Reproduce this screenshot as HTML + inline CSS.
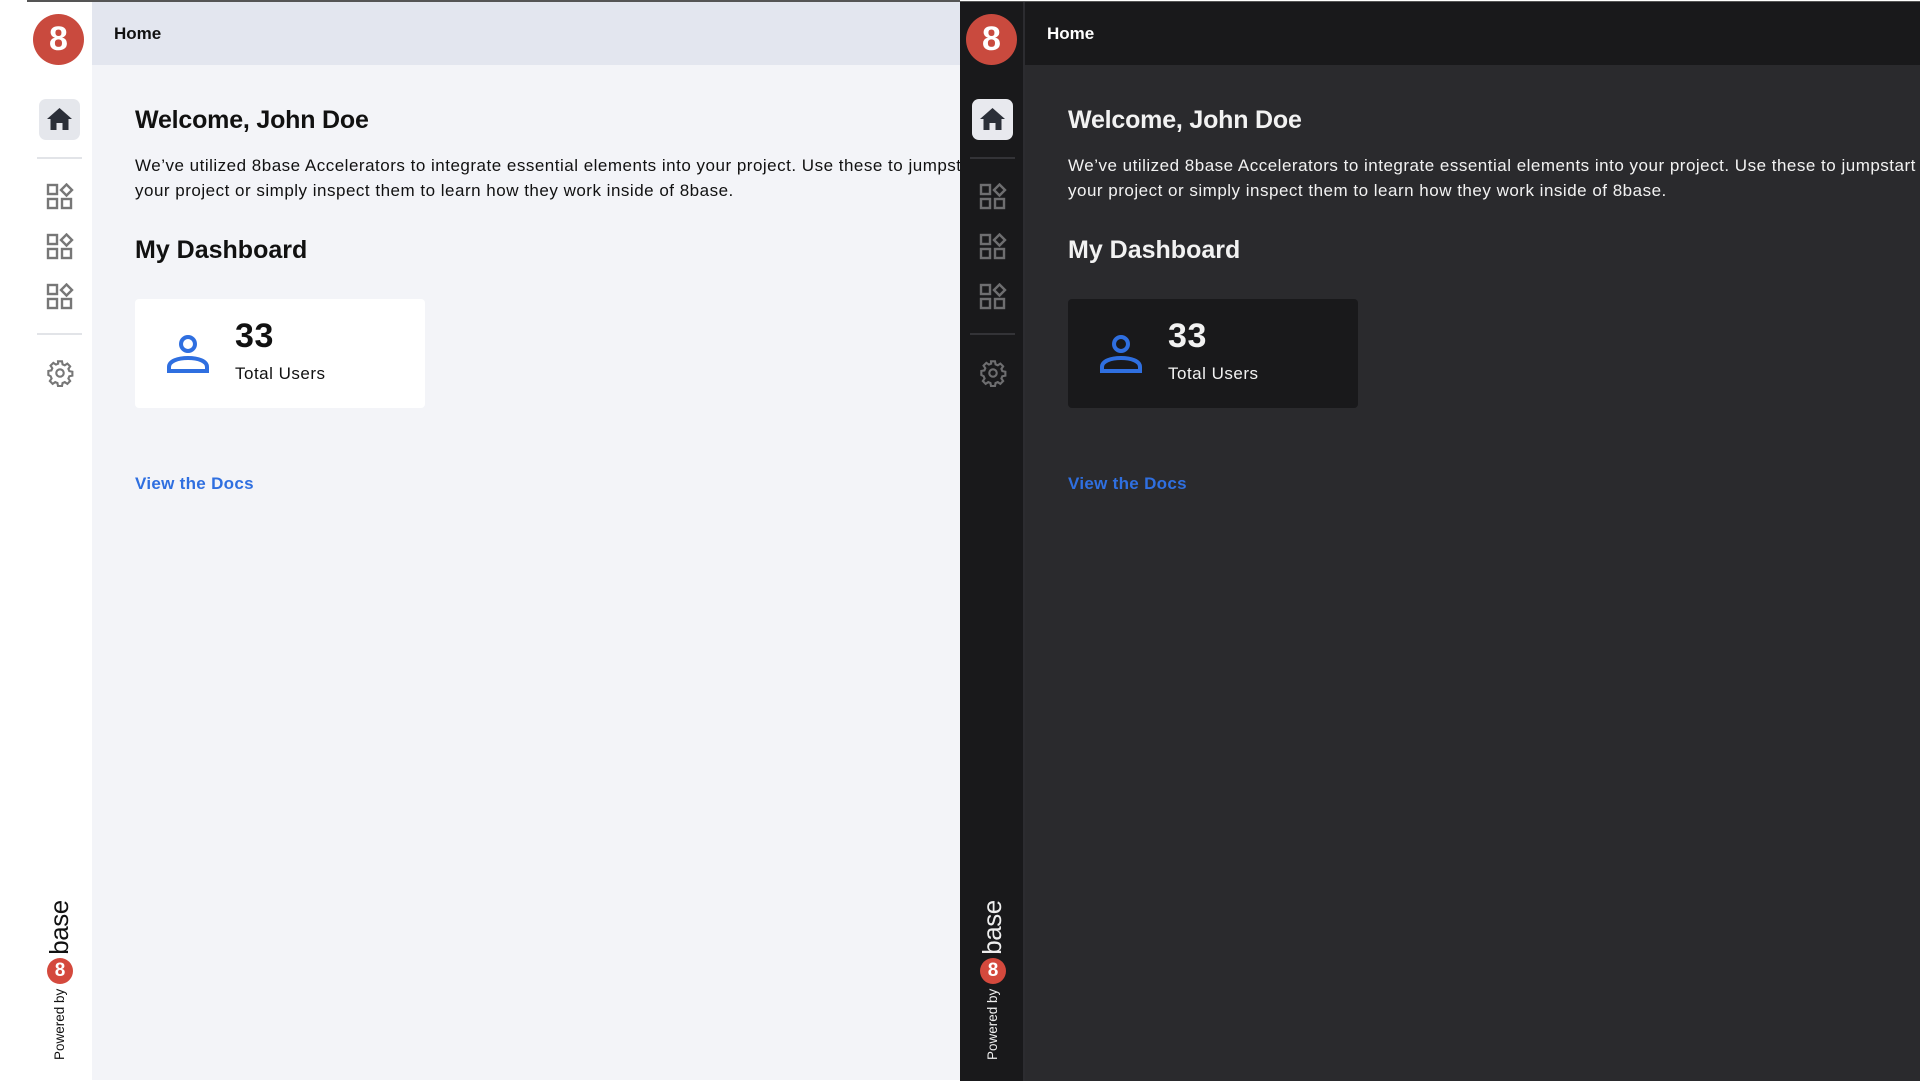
<!DOCTYPE html>
<html><head><meta charset="utf-8"><style>
*{margin:0;padding:0;box-sizing:border-box}
body{width:1920px;height:1080px;overflow:hidden;background:#fff;font-family:"Liberation Sans",Arial,sans-serif;position:relative}
.panel{position:absolute;top:0;height:1080px;overflow:hidden}
.p1{left:27px;width:933px}
.p2{left:960px;width:960px;top:1px}
.side{position:absolute;left:0;top:0;width:65px;height:1080px}
.main{position:absolute;left:65px;top:0;right:0;height:1080px}
.hdr{height:63px;padding-left:22px;font-weight:bold;font-size:17px;line-height:63px}
.logo{position:absolute;left:6px;top:12px;width:51px;height:51px;border-radius:50%;background:#c94a3e;color:#fff;font-weight:bold;font-size:34px;text-align:center;line-height:51px}
.home{position:absolute;left:12px;top:97px;width:41px;height:41px;border-radius:7px}
.div{position:absolute;left:10px;width:45px;height:2px}
.ic{position:absolute;left:19px}
.content{position:absolute;left:43px;top:0;white-space:nowrap}
h1{position:absolute;top:104px;font-size:25px;font-weight:bold;letter-spacing:-0.2px}
p{position:absolute;top:151px;font-size:17px;line-height:25px;letter-spacing:0.5px}
h2{position:absolute;top:234px;font-size:25px;font-weight:bold;letter-spacing:0px}
.card{position:absolute;top:297px;left:0;width:290px;height:109px;border-radius:4px}
.num{position:absolute;left:100px;top:18px;font-size:34px;font-weight:bold;letter-spacing:0.6px}
.tu{position:absolute;left:100px;top:65px;font-size:17px;letter-spacing:0.5px}
.docs{position:absolute;top:472px;font-size:17px;font-weight:bold;color:#2f6fe0;letter-spacing:0.3px}
.pb{position:absolute;left:17px;top:1058px;transform-origin:0 0;transform:rotate(-90deg);white-space:nowrap;display:flex;align-items:center}
.pb .s{font-size:13.5px;margin-right:5px}
.pb .c{width:26px;height:26px;border-radius:50%;background:#d4493d;color:#fff;font-weight:bold;font-size:19px;text-align:center;line-height:26px;transform:rotate(90deg);margin-right:3px}
.pb .b{font-size:26px;letter-spacing:-0.5px}
.p1{border-top:2px solid #555}
.p1 .side{background:#fff}.p1 .main{background:#f3f4f8}.p1 .hdr{background:#e3e6ef;color:#111}
.p1 .home{background:#e5e7ec}.p1 .div{background:#e2e4e8}
.p1 .content{color:#111}.p1 .card{background:#fff}.p1 .pb{color:#111}
.p2{border-top:1px solid #555}
.p2 .side{background:#19191b;border-right:2px solid #2c2c30}.p2 .main{background:#2a2a2d}.p2 .hdr{background:#19191b;color:#fff}
.p2 .home{background:#e8e9ee}.p2 .div{background:#333337}
.p2 .content{color:#f2f2f2}.p2 .card{background:#19191b}.p2 .pb{color:#eee}
</style></head><body>

<div class="panel p1">
 <div class="side">
  <div class="logo">8</div>
  <div class="home"><svg width="41" height="41" viewBox="0 0 41 41"><path d="M20.5 9 L33 20 L29.5 20 L29.5 31 L23.5 31 L23.5 24 L17.5 24 L17.5 31 L11.5 31 L11.5 20 L8 20 Z" fill="#2b2f38"/></svg></div>
  <div class="div" style="top:155px"></div>
  <svg class="ic" style="top:181px" width="28" height="28" viewBox="0 0 28 28" fill="none" stroke="#777" stroke-width="2.4"><rect x="2" y="2" width="9" height="9"/><rect x="2" y="16" width="9" height="9"/><rect x="16" y="16" width="9" height="9"/><path d="M20.5 1.5 L26 7 L20.5 12.5 L15 7 Z"/></svg>
  <svg class="ic" style="top:231px" width="28" height="28" viewBox="0 0 28 28" fill="none" stroke="#777" stroke-width="2.4"><rect x="2" y="2" width="9" height="9"/><rect x="2" y="16" width="9" height="9"/><rect x="16" y="16" width="9" height="9"/><path d="M20.5 1.5 L26 7 L20.5 12.5 L15 7 Z"/></svg>
  <svg class="ic" style="top:281px" width="28" height="28" viewBox="0 0 28 28" fill="none" stroke="#777" stroke-width="2.4"><rect x="2" y="2" width="9" height="9"/><rect x="2" y="16" width="9" height="9"/><rect x="16" y="16" width="9" height="9"/><path d="M20.5 1.5 L26 7 L20.5 12.5 L15 7 Z"/></svg>
  <div class="div" style="top:331px"></div>
  <svg class="ic" style="top:357px" width="28" height="28" viewBox="0 0 24 24" fill="none" stroke="#777" stroke-width="1.8"><circle cx="12" cy="12" r="3.2"/><path d="M10.3 2h3.4l.5 2.6 1.9.8 2.2-1.5 2.4 2.4-1.5 2.2.8 1.9 2.6.5v3.4l-2.6.5-.8 1.9 1.5 2.2-2.4 2.4-2.2-1.5-1.9.8-.5 2.6h-3.4l-.5-2.6-1.9-.8-2.2 1.5-2.4-2.4 1.5-2.2-.8-1.9L2 13.7v-3.4l2.6-.5.8-1.9-1.5-2.2 2.4-2.4 2.2 1.5 1.9-.8z"/></svg>
  <div class="pb"><span class="s">Powered by</span><span class="c">8</span><span class="b">base</span></div>
 </div>
 <div class="main">
  <div class="hdr">Home</div>
  <div class="content">
   <h1>Welcome, John Doe</h1>
   <p>We’ve utilized 8base Accelerators to integrate essential elements into your project. Use these to jumpstart<br>your project or simply inspect them to learn how they work inside of 8base.</p>
   <h2>My Dashboard</h2>
   <div class="card">
    <svg style="position:absolute;left:31px;top:34px" width="44" height="42" viewBox="0 0 44 42" fill="none" stroke="#2f6fe0" stroke-width="4"><circle cx="22" cy="11" r="7"/><path d="M3 38 V34 C3 28 12 25 22 25 C32 25 41 28 41 34 V38 Z"/></svg>
    <div class="num">33</div><div class="tu">Total Users</div>
   </div>
   <div class="docs">View the Docs</div>
  </div>
 </div>
</div>

<div class="panel p2">
 <div class="side">
  <div class="logo">8</div>
  <div class="home"><svg width="41" height="41" viewBox="0 0 41 41"><path d="M20.5 9 L33 20 L29.5 20 L29.5 31 L23.5 31 L23.5 24 L17.5 24 L17.5 31 L11.5 31 L11.5 20 L8 20 Z" fill="#2b2f38"/></svg></div>
  <div class="div" style="top:155px"></div>
  <svg class="ic" style="top:181px" width="28" height="28" viewBox="0 0 28 28" fill="none" stroke="#6e6e70" stroke-width="2.4"><rect x="2" y="2" width="9" height="9"/><rect x="2" y="16" width="9" height="9"/><rect x="16" y="16" width="9" height="9"/><path d="M20.5 1.5 L26 7 L20.5 12.5 L15 7 Z"/></svg>
  <svg class="ic" style="top:231px" width="28" height="28" viewBox="0 0 28 28" fill="none" stroke="#6e6e70" stroke-width="2.4"><rect x="2" y="2" width="9" height="9"/><rect x="2" y="16" width="9" height="9"/><rect x="16" y="16" width="9" height="9"/><path d="M20.5 1.5 L26 7 L20.5 12.5 L15 7 Z"/></svg>
  <svg class="ic" style="top:281px" width="28" height="28" viewBox="0 0 28 28" fill="none" stroke="#6e6e70" stroke-width="2.4"><rect x="2" y="2" width="9" height="9"/><rect x="2" y="16" width="9" height="9"/><rect x="16" y="16" width="9" height="9"/><path d="M20.5 1.5 L26 7 L20.5 12.5 L15 7 Z"/></svg>
  <div class="div" style="top:331px"></div>
  <svg class="ic" style="top:357px" width="28" height="28" viewBox="0 0 24 24" fill="none" stroke="#6e6e70" stroke-width="1.8"><circle cx="12" cy="12" r="3.2"/><path d="M10.3 2h3.4l.5 2.6 1.9.8 2.2-1.5 2.4 2.4-1.5 2.2.8 1.9 2.6.5v3.4l-2.6.5-.8 1.9 1.5 2.2-2.4 2.4-2.2-1.5-1.9.8-.5 2.6h-3.4l-.5-2.6-1.9-.8-2.2 1.5-2.4-2.4 1.5-2.2-.8-1.9L2 13.7v-3.4l2.6-.5.8-1.9-1.5-2.2 2.4-2.4 2.2 1.5 1.9-.8z"/></svg>
  <div class="pb"><span class="s">Powered by</span><span class="c">8</span><span class="b">base</span></div>
 </div>
 <div class="main">
  <div class="hdr">Home</div>
  <div class="content">
   <h1>Welcome, John Doe</h1>
   <p>We’ve utilized 8base Accelerators to integrate essential elements into your project. Use these to jumpstart<br>your project or simply inspect them to learn how they work inside of 8base.</p>
   <h2>My Dashboard</h2>
   <div class="card">
    <svg style="position:absolute;left:31px;top:34px" width="44" height="42" viewBox="0 0 44 42" fill="none" stroke="#2f6fe0" stroke-width="4"><circle cx="22" cy="11" r="7"/><path d="M3 38 V34 C3 28 12 25 22 25 C32 25 41 28 41 34 V38 Z"/></svg>
    <div class="num">33</div><div class="tu">Total Users</div>
   </div>
   <div class="docs">View the Docs</div>
  </div>
 </div>
</div>
</body></html>
